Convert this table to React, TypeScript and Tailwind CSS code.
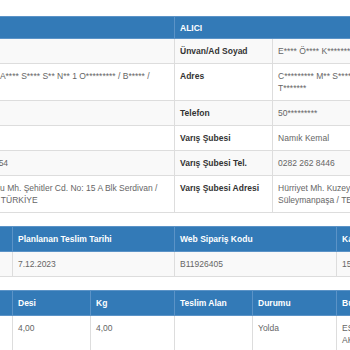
import React from 'react';

type InfoRow = {
  senderLabel: string;
  sender: string[];
  receiverLabel: string;
  receiver: string[];
};

const infoRows: InfoRow[] = [
  { senderLabel: 'Ünvan/Ad Soyad', sender: ['M**** Y****'], receiverLabel: 'Ünvan/Ad Soyad', receiver: ['E**** Ö**** K*******'] },
  {
    senderLabel: 'Adres',
    sender: ['M****** M** A**** S**** S** N** 1 O********* / B***** /', 'S*******'],
    receiverLabel: 'Adres',
    receiver: ['C********* M** S**** S** N** 1 A****** / B***** /', 'T*******'],
  },
  { senderLabel: 'Telefon', sender: ['05*********'], receiverLabel: 'Telefon', receiver: ['50*********'] },
  { senderLabel: 'Çıkış Şubesi', sender: ['Serdivan'], receiverLabel: 'Varış Şubesi', receiver: ['Namık Kemal'] },
  { senderLabel: 'Çıkış Şubesi Tel.', sender: ['0264 2911154'], receiverLabel: 'Varış Şubesi Tel.', receiver: ['0282 262 8446'] },
  {
    senderLabel: 'Çıkış Şubesi Adresi',
    sender: ['Yeni Çubuklu Mh. Şehitler Cd. No: 15 A Blk Serdivan /', 'SAKARYA / TÜRKİYE'],
    receiverLabel: 'Varış Şubesi Adresi',
    receiver: ['Hürriyet Mh. Kuzey Cd. No: 12 Merkez /', 'Süleymanpaşa / TEKİRDAĞ'],
  },
];

const th = 'border border-[#5b93c7] px-[5px] text-left font-bold text-white align-middle';
const td = 'border border-[#dddddd] px-[5px] py-[6px] align-top whitespace-nowrap overflow-hidden';

const Lines: React.FC<{ lines: string[] }> = ({ lines }) => (
  <>
    {lines.map((line, i) => (
      <div key={i}>{line}</div>
    ))}
  </>
);

const App: React.FC = () => {
  return (
    <div
      className="w-[350px] h-[350px] overflow-hidden bg-white text-[8.5px] leading-[12px] text-[#666]"
      style={{ fontFamily: '"Liberation Sans", Arial, sans-serif' }}
    >
      <div className="-ml-[149px] w-[640px] pt-[16px] flex flex-col gap-[13px]">
        {/* Sender / receiver details */}
        <table className="w-full table-fixed border-collapse">
          <colgroup>
            <col className="w-[98px]" />
            <col className="w-[225px]" />
            <col className="w-[98px]" />
            <col />
          </colgroup>
          <thead>
            <tr className="bg-[#337ab7] h-[22px]">
              <th colSpan={2} className={th}>GÖNDERİCİ</th>
              <th colSpan={2} className={th}>ALICI</th>
            </tr>
          </thead>
          <tbody>
            {infoRows.map((row, i) => (
              <tr key={i} className={i % 2 === 0 ? 'bg-[#f9f9f9]' : 'bg-white'}>
                <td className={`${td} font-bold text-[#333]`}>{row.senderLabel}</td>
                <td className={td}><Lines lines={row.sender} /></td>
                <td className={`${td} font-bold text-[#333]`}>{row.receiverLabel}</td>
                <td className={td}><Lines lines={row.receiver} /></td>
              </tr>
            ))}
          </tbody>
        </table>

        {/* Dates and codes */}
        <table className="w-full table-fixed border-collapse">
          <colgroup>
            <col className="w-[161px]" />
            <col className="w-[162px]" />
            <col className="w-[162px]" />
            <col />
          </colgroup>
          <thead>
            <tr className="bg-[#337ab7] h-[25px]">
              <th className={th}>Gönderi Tarihi</th>
              <th className={th}>Planlanan Teslim Tarihi</th>
              <th className={th}>Web Sipariş Kodu</th>
              <th className={th}>Kargo Takip No</th>
            </tr>
          </thead>
          <tbody>
            <tr className="bg-[#f9f9f9]">
              <td className={td}>5.12.2023</td>
              <td className={td}>7.12.2023</td>
              <td className={td}>B11926405</td>
              <td className={td}>15048827391</td>
            </tr>
          </tbody>
        </table>

        {/* Package and status */}
        <table className="w-full table-fixed border-collapse">
          <colgroup>
            <col className="w-[161px]" />
            <col className="w-[78px]" />
            <col className="w-[84px]" />
            <col className="w-[78px]" />
            <col className="w-[84px]" />
            <col />
          </colgroup>
          <thead>
            <tr className="bg-[#337ab7] h-[25px]">
              <th className={th}>Adet</th>
              <th className={th}>Desi</th>
              <th className={th}>Kg</th>
              <th className={th}>Teslim Alan</th>
              <th className={th}>Durumu</th>
              <th className={th}>Bulunduğu Şube</th>
            </tr>
          </thead>
          <tbody>
            <tr className="bg-white">
              <td className={td}>1</td>
              <td className={td}>4,00</td>
              <td className={td}>4,00</td>
              <td className={td}></td>
              <td className={td}>Yolda</td>
              <td className={`${td} pb-[14px]`}>
                <Lines lines={['ESKİŞEHİR TRANSFER MERKEZİ', 'AKTARMA']} />
              </td>
            </tr>
          </tbody>
        </table>
      </div>
    </div>
  );
};

export default App;
